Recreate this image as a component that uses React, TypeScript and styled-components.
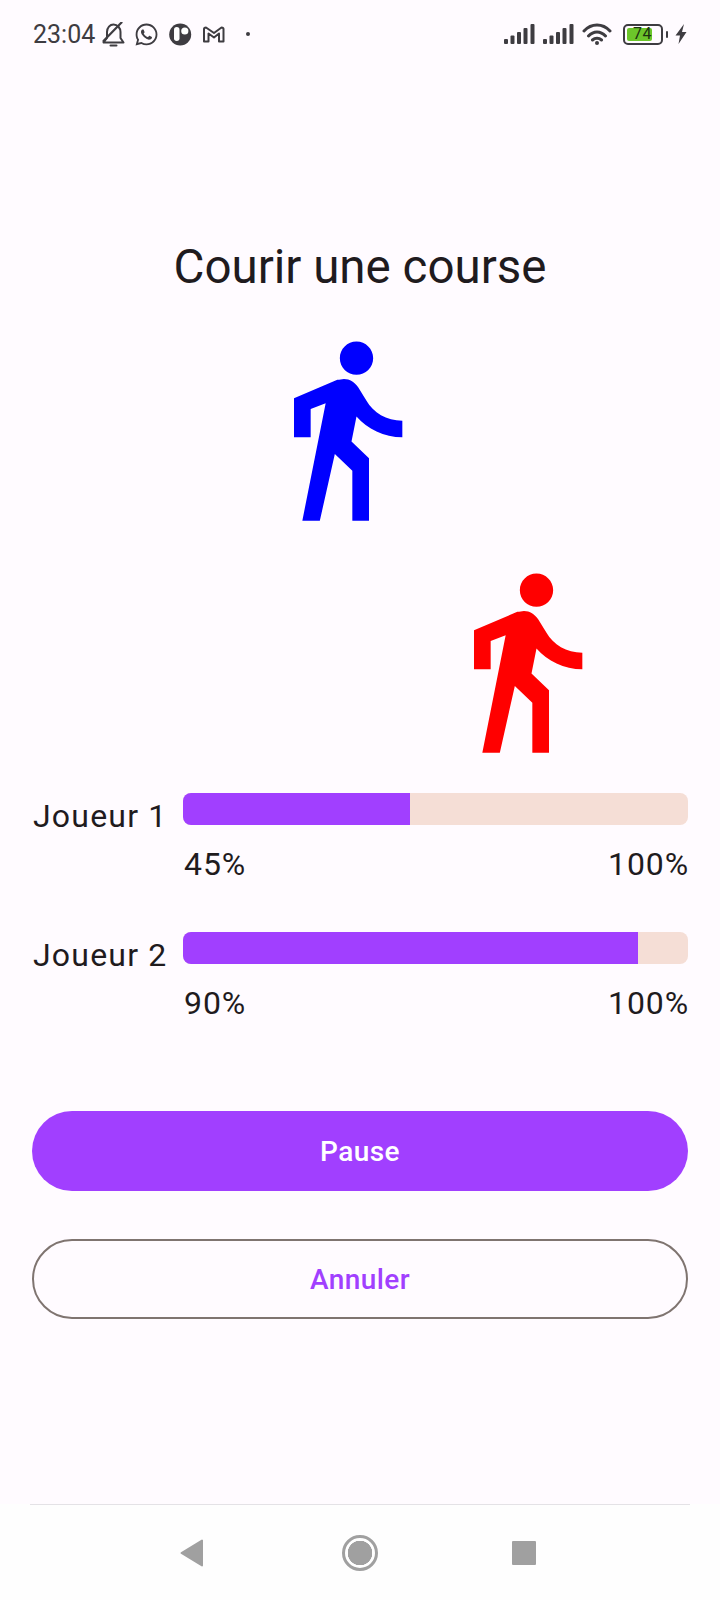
import React from 'react';
import styled, { createGlobalStyle } from 'styled-components';
import { FaWhatsapp } from 'react-icons/fa';

const WALK_PATH =
  'M13.5 5.5c1.1 0 2-.9 2-2s-.9-2-2-2-2 .9-2 2 .9 2 2 2zM9.8 8.9L7 23h2.1l1.8-8 2.1 2v6h2v-7.5l-2.1-2 .6-3C14.8 12 16.8 13 19 13v-2c-1.9 0-3.5-1-4.3-2.4l-1-1.6c-.4-.6-1-1-1.7-1-.3 0-.5.1-.8.1L6 8.3V13h2V9.6l1.8-.7z';

const players = [
  { name: 'Joueur 1', progress: 45, color: '#0000ff' },
  { name: 'Joueur 2', progress: 90, color: '#ff0000' },
];

const ICON = '#3e3c41';

const SignalBars = () => (
  <svg width="31" height="20" viewBox="0 0 31 20">
    <rect x="0" y="15" width="4" height="5" rx="1" fill={ICON} />
    <rect x="6.5" y="11.5" width="4" height="8.5" rx="1" fill={ICON} />
    <rect x="13" y="8" width="4" height="12" rx="1" fill={ICON} />
    <rect x="19.5" y="4" width="4" height="16" rx="1" fill={ICON} />
    <rect x="26.5" y="0" width="4" height="20" rx="1" fill={ICON} />
  </svg>
);

const App: React.FC = () => {
  return (
    <Screen>
      <GlobalStyle />
      <StatusBar>
        <StatusLeft>
          <Time>23:04</Time>
          <svg width="23" height="25" viewBox="0 0 23 25">
            <path
              d="M1.5 20.5H21.5L18.5 16V10C18.5 6 15.5 2.5 11.5 2.5C8 2.5 5 5.5 5 10V16Z"
              fill="none"
              stroke={ICON}
              strokeWidth="2"
              strokeLinejoin="round"
            />
            <path d="M19.5 0.5L1.5 19" stroke={ICON} strokeWidth="2.2" strokeLinecap="round" />
            <path d="M8.5 23.5H14.5" stroke={ICON} strokeWidth="2" strokeLinecap="round" />
          </svg>
          <WhatsApp size={25} color={ICON} />
          <svg width="23" height="23" viewBox="0 0 23 23">
            <circle cx="11.2" cy="11.5" r="11" fill={ICON} />
            <rect x="5" y="4" width="5.5" height="14" rx="2.7" fill="#fff" />
            <circle cx="15.8" cy="8" r="3.6" fill="#fff" />
          </svg>
          <svg width="23" height="17" viewBox="0 0 23 17">
            <path
              d="M2 15.5V3Q2 1.5 4 1.5L12 7L19.5 1.5Q21.5 1.5 21.5 3V15.5H17V7.5L12 11.5L6.5 7.5V15.5Z"
              fill="none"
              stroke={ICON}
              strokeWidth="2"
              strokeLinejoin="round"
            />
          </svg>
          <Dot />
        </StatusLeft>
        <StatusRight>
          <SignalBars />
          <SignalBars />
          <svg width="30" height="22" viewBox="0 0 30 22">
            <path
              d="M2 8C9.5 0 20.5 0 28 8M6.5 13C11.5 7.5 18.5 7.5 23.5 13M10.5 17C13 14.8 17 14.8 19.5 17"
              fill="none"
              stroke={ICON}
              strokeWidth="3"
              strokeLinecap="round"
            />
            <circle cx="15" cy="20" r="2" fill={ICON} />
          </svg>
          <Battery>
            <BatteryBody>
              <BatteryFill />
              <BatteryText>74</BatteryText>
            </BatteryBody>
            <BatteryTip />
          </Battery>
          <svg width="12" height="20" viewBox="0 0 12 20">
            <path d="M9 0L0.5 11.5H5L3.5 20L11.5 8H7Z" fill={ICON} />
          </svg>
        </StatusRight>
      </StatusBar>

      <Main>
        <Title>Courir une course</Title>
        <Runners>
          {players.map((p) => (
            <Runner key={p.name} $progress={p.progress} viewBox="0 0 24 24">
              <path d={WALK_PATH} fill={p.color} />
            </Runner>
          ))}
        </Runners>

        <Rows>
          {players.map((p) => (
            <PlayerRow key={p.name}>
              <PlayerName>{p.name}</PlayerName>
              <ProgressColumn>
                <Track>
                  <Fill style={{ width: `${p.progress}%` }} />
                </Track>
                <Legend>
                  <span>{p.progress}%</span>
                  <span>100%</span>
                </Legend>
              </ProgressColumn>
            </PlayerRow>
          ))}
        </Rows>

        <Buttons>
          <PrimaryButton>Pause</PrimaryButton>
          <OutlineButton>Annuler</OutlineButton>
        </Buttons>
      </Main>

      <NavBar>
        <NavInner>
          <svg width="24" height="28" viewBox="0 0 24 28">
            <path d="M22 1.5V26.5L1.5 14Z" fill="#a0a0a0" stroke="#a0a0a0" strokeWidth="2" strokeLinejoin="round" />
          </svg>
          <HomeRing />
          <RecentSquare />
        </NavInner>
      </NavBar>
    </Screen>
  );
};

const GlobalStyle = createGlobalStyle`
  html, body {
    margin: 0;
    padding: 0;
    background: #fffbff;
  }
  * {
    box-sizing: border-box;
  }
`;

const Screen = styled.div`
  width: 720px;
  height: 1600px;
  display: flex;
  flex-direction: column;
  background: #fffbff;
  font-family: Roboto, 'Liberation Sans', sans-serif;
  color: #1f1b1e;
`;

const StatusBar = styled.div`
  height: 68px;
  padding: 0 33px;
  display: flex;
  justify-content: space-between;
  align-items: center;
`;

const StatusLeft = styled.div`
  display: flex;
  align-items: center;
  gap: 10px;
`;

const Time = styled.span`
  width: 59px;
  font-size: 25px;
  color: ${ICON};
  white-space: nowrap;
`;

const WhatsApp = styled(FaWhatsapp)`
  margin-left: -1px;
`;

const Dot = styled.span`
  width: 4px;
  height: 4px;
  border-radius: 50%;
  background: ${ICON};
  margin-left: 11px;
`;

const StatusRight = styled.div`
  display: flex;
  align-items: center;
  gap: 8px;
`;

const Battery = styled.div`
  display: flex;
  align-items: center;
  gap: 3px;
  margin: 0 -1px 0 3px;
`;

const BatteryBody = styled.div`
  width: 40px;
  height: 21px;
  border: 2.5px solid ${ICON};
  border-radius: 5px;
  padding: 2px;
  position: relative;
  display: flex;
`;

const BatteryFill = styled.div`
  width: 78%;
  border-radius: 2px;
  background: #6cc62a;
`;

const BatteryText = styled.span`
  position: absolute;
  left: 8px;
  top: -1px;
  font-size: 16px;
  line-height: 18px;
  letter-spacing: 0.5px;
  color: #1c3310;
`;

const BatteryTip = styled.div`
  width: 2px;
  height: 7px;
  background: ${ICON};
  border-radius: 1px;
`;

const Main = styled.div`
  flex: 1;
  display: flex;
  flex-direction: column;
`;

const Title = styled.h1`
  margin: 169px 0 0;
  height: 60px;
  font-size: 47.5px;
  line-height: 60px;
  font-weight: 400;
  text-align: center;
`;

const Runners = styled.div`
  margin-top: 32px;
  display: flex;
  flex-direction: column;
  gap: 32px;
`;

const Runner = styled.svg<{ $progress: number }>`
  display: block;
  width: 200px;
  height: 200px;
  margin-left: ${(p) => 64 + p.$progress * 4}px;
`;

const Rows = styled.div`
  margin-top: 32px;
  padding: 0 32px;
  display: flex;
  flex-direction: column;
  gap: 48px;
`;

const PlayerRow = styled.div`
  display: flex;
  gap: 16px;
`;

const PlayerName = styled.div`
  width: 135px;
  padding: 3px 0 0 1px;
  font-size: 32px;
  line-height: 40px;
  letter-spacing: 1.2px;
  white-space: nowrap;
`;

const ProgressColumn = styled.div`
  flex: 1;
  display: flex;
  flex-direction: column;
`;

const Track = styled.div`
  height: 32px;
  border-radius: 8px;
  background: #f5ded6;
  overflow: hidden;
`;

const Fill = styled.div`
  height: 100%;
  background: #a13fff;
`;

const Legend = styled.div`
  margin: 19px -1px 0 1px;
  height: 40px;
  display: flex;
  justify-content: space-between;
  font-size: 32px;
  line-height: 40px;
  letter-spacing: 0.9px;
`;

const Buttons = styled.div`
  margin-top: 88px;
  padding: 0 32px;
  display: flex;
  flex-direction: column;
  gap: 48px;
`;

const PrimaryButton = styled.button`
  height: 80px;
  padding-top: 2px;
  border: none;
  border-radius: 40px;
  background: #a13fff;
  color: #fff;
  font-family: inherit;
  font-size: 28px;
  font-weight: 500;
  letter-spacing: 0.4px;
`;

const OutlineButton = styled.button`
  height: 80px;
  padding-top: 2px;
  border: 2px solid #7f7470;
  border-radius: 40px;
  background: transparent;
  color: #a13fff;
  font-family: inherit;
  font-size: 28px;
  font-weight: 500;
  letter-spacing: 0.4px;
`;

const NavBar = styled.div`
  height: 96px;
  background: #fefefe;
  padding: 0 30px;
`;

const NavInner = styled.div`
  height: 100%;
  border-top: 1px solid #e4e2e6;
  padding-left: 150px;
  display: flex;
  align-items: center;
`;

const HomeRing = styled.div`
  width: 36px;
  height: 36px;
  margin: 0 134px 0 138px;
  border-radius: 50%;
  border: 3px solid #a0a0a0;
  background: radial-gradient(circle, #a0a0a0 0 12px, #fff 12.5px);
`;

const RecentSquare = styled.div`
  width: 24px;
  height: 24px;
  border-radius: 1px;
  background: #a0a0a0;
`;

export default App;
